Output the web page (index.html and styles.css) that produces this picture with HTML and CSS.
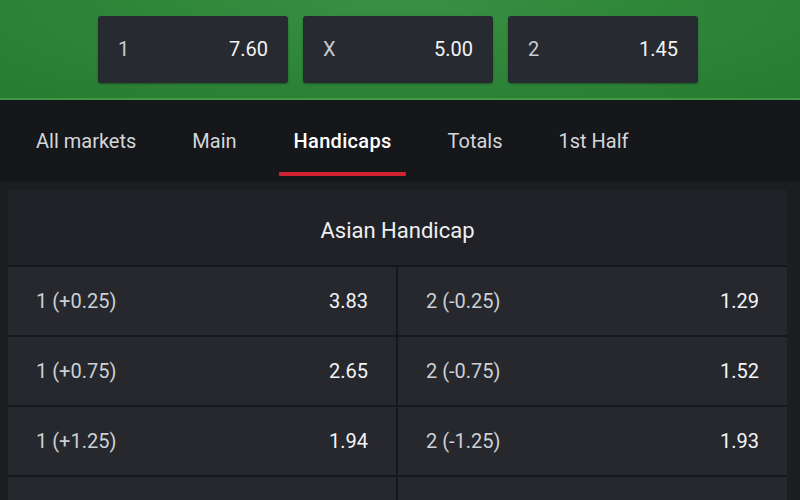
FILE: index.html
```html
<!DOCTYPE html>
<html lang="en">
<head>
    <meta charset="UTF-8">
    <meta name="viewport" content="width=device-width, initial-scale=1.0">
    <title>Handicaps</title>
    <link rel="stylesheet" href="styles.css">
</head>
<body>
    <header class="match-top">
        <div class="odds-btn"><span>1</span><span class="odd">7.60</span></div>
        <div class="odds-btn"><span>X</span><span class="odd">5.00</span></div>
        <div class="odds-btn"><span>2</span><span class="odd">1.45</span></div>
    </header>

    <nav class="tabs">
        <a href="#">All markets</a>
        <a href="#">Main</a>
        <a href="#" class="active">Handicaps</a>
        <a href="#">Totals</a>
        <a href="#">1st Half</a>
    </nav>

    <main class="markets">
        <section class="market">
            <h3 class="market-title">Asian Handicap</h3>
            <div class="grid">
                <div class="cell"><span>1 (+0.25)</span><span class="odd">3.83</span></div>
                <div class="cell"><span>2 (-0.25)</span><span class="odd">1.29</span></div>
                <div class="cell"><span>1 (+0.75)</span><span class="odd">2.65</span></div>
                <div class="cell"><span>2 (-0.75)</span><span class="odd">1.52</span></div>
                <div class="cell"><span>1 (+1.25)</span><span class="odd">1.94</span></div>
                <div class="cell"><span>2 (-1.25)</span><span class="odd">1.93</span></div>
                <div class="cell"></div>
                <div class="cell"></div>
            </div>
        </section>
    </main>
</body>
</html>
```

FILE: styles.css
```css
*{
    box-sizing: border-box;
}
body{
    margin: 0;
    background-color: #1b1d21;
    color: #e6e7ea;
    font-family: Roboto, 'Liberation Sans', sans-serif;
    overflow: hidden;
}

.match-top{
    height: 100px;
    background: radial-gradient(ellipse at 50% 0%, #3a9044 0%, #2f873a 45%, #287b32 100%);
    border-bottom: 2px solid #3d9a45;
    display: flex;
    gap: 15px;
    padding-top: 16px;
    padding-left: 98px;
}

.odds-btn{
    width: 190px;
    height: 67px;
    background-color: #272a30;
    border-radius: 3px;
    box-shadow: 0 1px 2px rgba(0, 0, 0, 0.35);
    display: flex;
    justify-content: space-between;
    align-items: center;
    padding: 0 20px 2px 20px;
    font-size: 20px;
    color: #c9cbd0;
}

.odds-btn .odd{
    color: #f2f3f5;
}

.tabs{
    height: 82px;
    background-color: #15171a;
    display: flex;
    gap: 28px;
    padding-left: 22px;
}

.tabs a{
    color: #d4d6da;
    text-decoration: none;
    font-size: 20px;
    padding: 29px 14px 0 14px;
    position: relative;
}

.tabs a.active{
    color: #ffffff;
    font-weight: 500;
    letter-spacing: 0.3px;
    padding-left: 15px;
    padding-right: 14px;
}

.tabs a.active::after{
    content: '';
    position: absolute;
    left: 0;
    right: 0;
    top: 72px;
    height: 4px;
    background-color: #d1232f;
    border-radius: 1px;
}

.markets{
    padding: 8px 13px 0 8px;
}

.market{
    background-color: #202227;
}

.market-title{
    margin: 0;
    height: 75px;
    display: flex;
    justify-content: center;
    align-items: center;
    font-size: 22px;
    font-weight: 400;
    color: #eeeff1;
    padding-top: 5px;
}

.grid{
    display: grid;
    grid-template-columns: 388px 1fr;
    gap: 2px;
    background-color: #16181b;
    padding-top: 2px;
}

.cell{
    height: 68px;
    background-color: #26282e;
    display: flex;
    justify-content: space-between;
    align-items: center;
    padding: 0 28px;
    font-size: 20px;
    color: #cdd0d4;
}

.cell .odd{
    color: #f3f4f6;
}
```
